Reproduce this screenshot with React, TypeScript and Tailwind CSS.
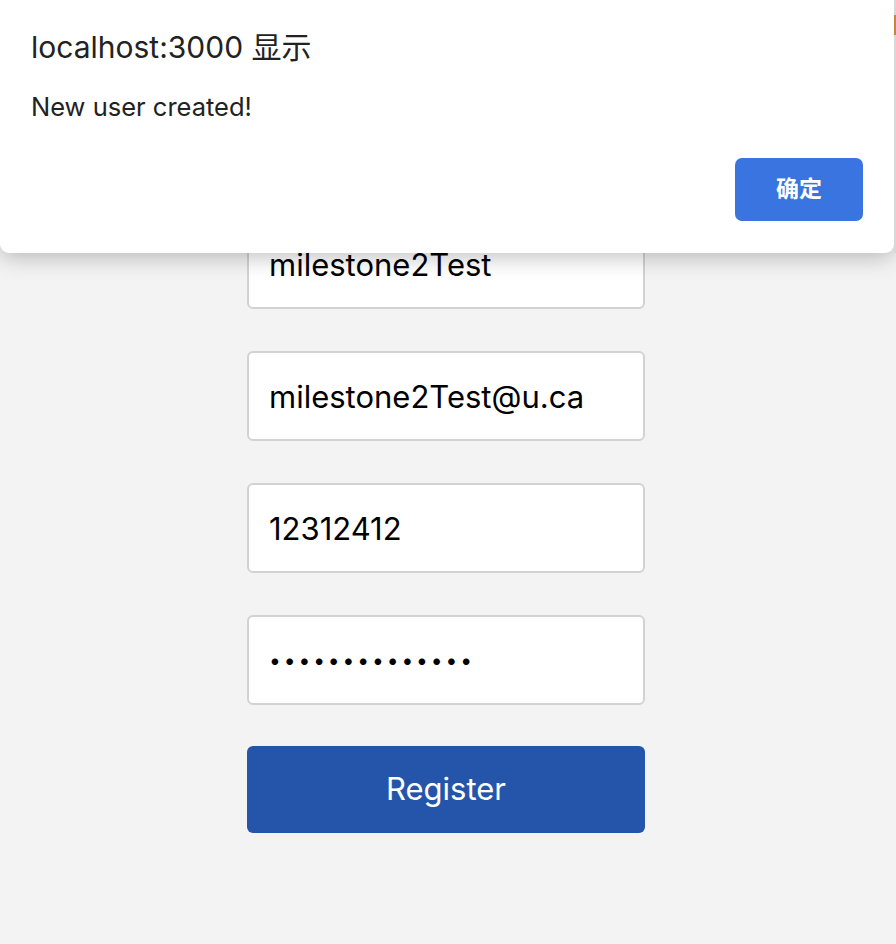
import React from "react";

const font = { fontFamily: 'Inter, "Noto Sans CJK SC", sans-serif' };

function Field({ value, small = false }: { value: string; small?: boolean }) {
  return (
    <input
      readOnly
      type="text"
      value={value}
      className={
        small
          ? "w-[398px] h-[90px] rounded-[6px] border-2 border-[#d2d2d2] bg-white px-[20px] text-[21px] tracking-[2.9px] text-black outline-none"
          : "w-[398px] h-[90px] rounded-[6px] border-2 border-[#d2d2d2] bg-white px-[20px] text-[31px] text-black outline-none"
      }
      style={font}
    />
  );
}

export default function App() {
  return (
    <div className="relative min-h-[944px] w-full bg-[#f3f3f3]" style={font}>
      <div className="flex flex-col items-center gap-[42px] pt-[219px] pr-[4px]">
        <Field value="milestone2Test" />
        <Field value="milestone2Test@u.ca" />
        <Field value="12312412" />
        <Field value="••••••••••••••" small />
        <button className="-mt-[1px] w-[398px] h-[87px] rounded-[6px] bg-[#2455ab] text-[31px] text-white">
          Register
        </button>
      </div>

      <div className="absolute left-0 top-0 w-[894px] h-[253px] rounded-b-[9px] bg-white shadow-[0_4px_22px_rgba(0,0,0,0.25)] flex flex-col px-[31px] pt-[29px]">
        <div className="text-[30px] leading-[36px] text-[#222222]">localhost:3000 显示</div>
        <div className="mt-[27px] text-[25.5px] leading-[30px] text-[#222222]">New user created!</div>
        <div className="mt-auto mb-[32px] flex justify-end">
          <button className="w-[128px] h-[63px] rounded-[7px] bg-[#3a74e0] text-[23px] font-bold text-white">
            确定
          </button>
        </div>
      </div>
      <div className="absolute right-0 top-0 h-[253px] w-[2px] bg-[#d8d8d8]" />
      <div className="absolute right-0 top-[15px] h-[20px] w-[2px] bg-[#c8843a]" />
    </div>
  );
}
